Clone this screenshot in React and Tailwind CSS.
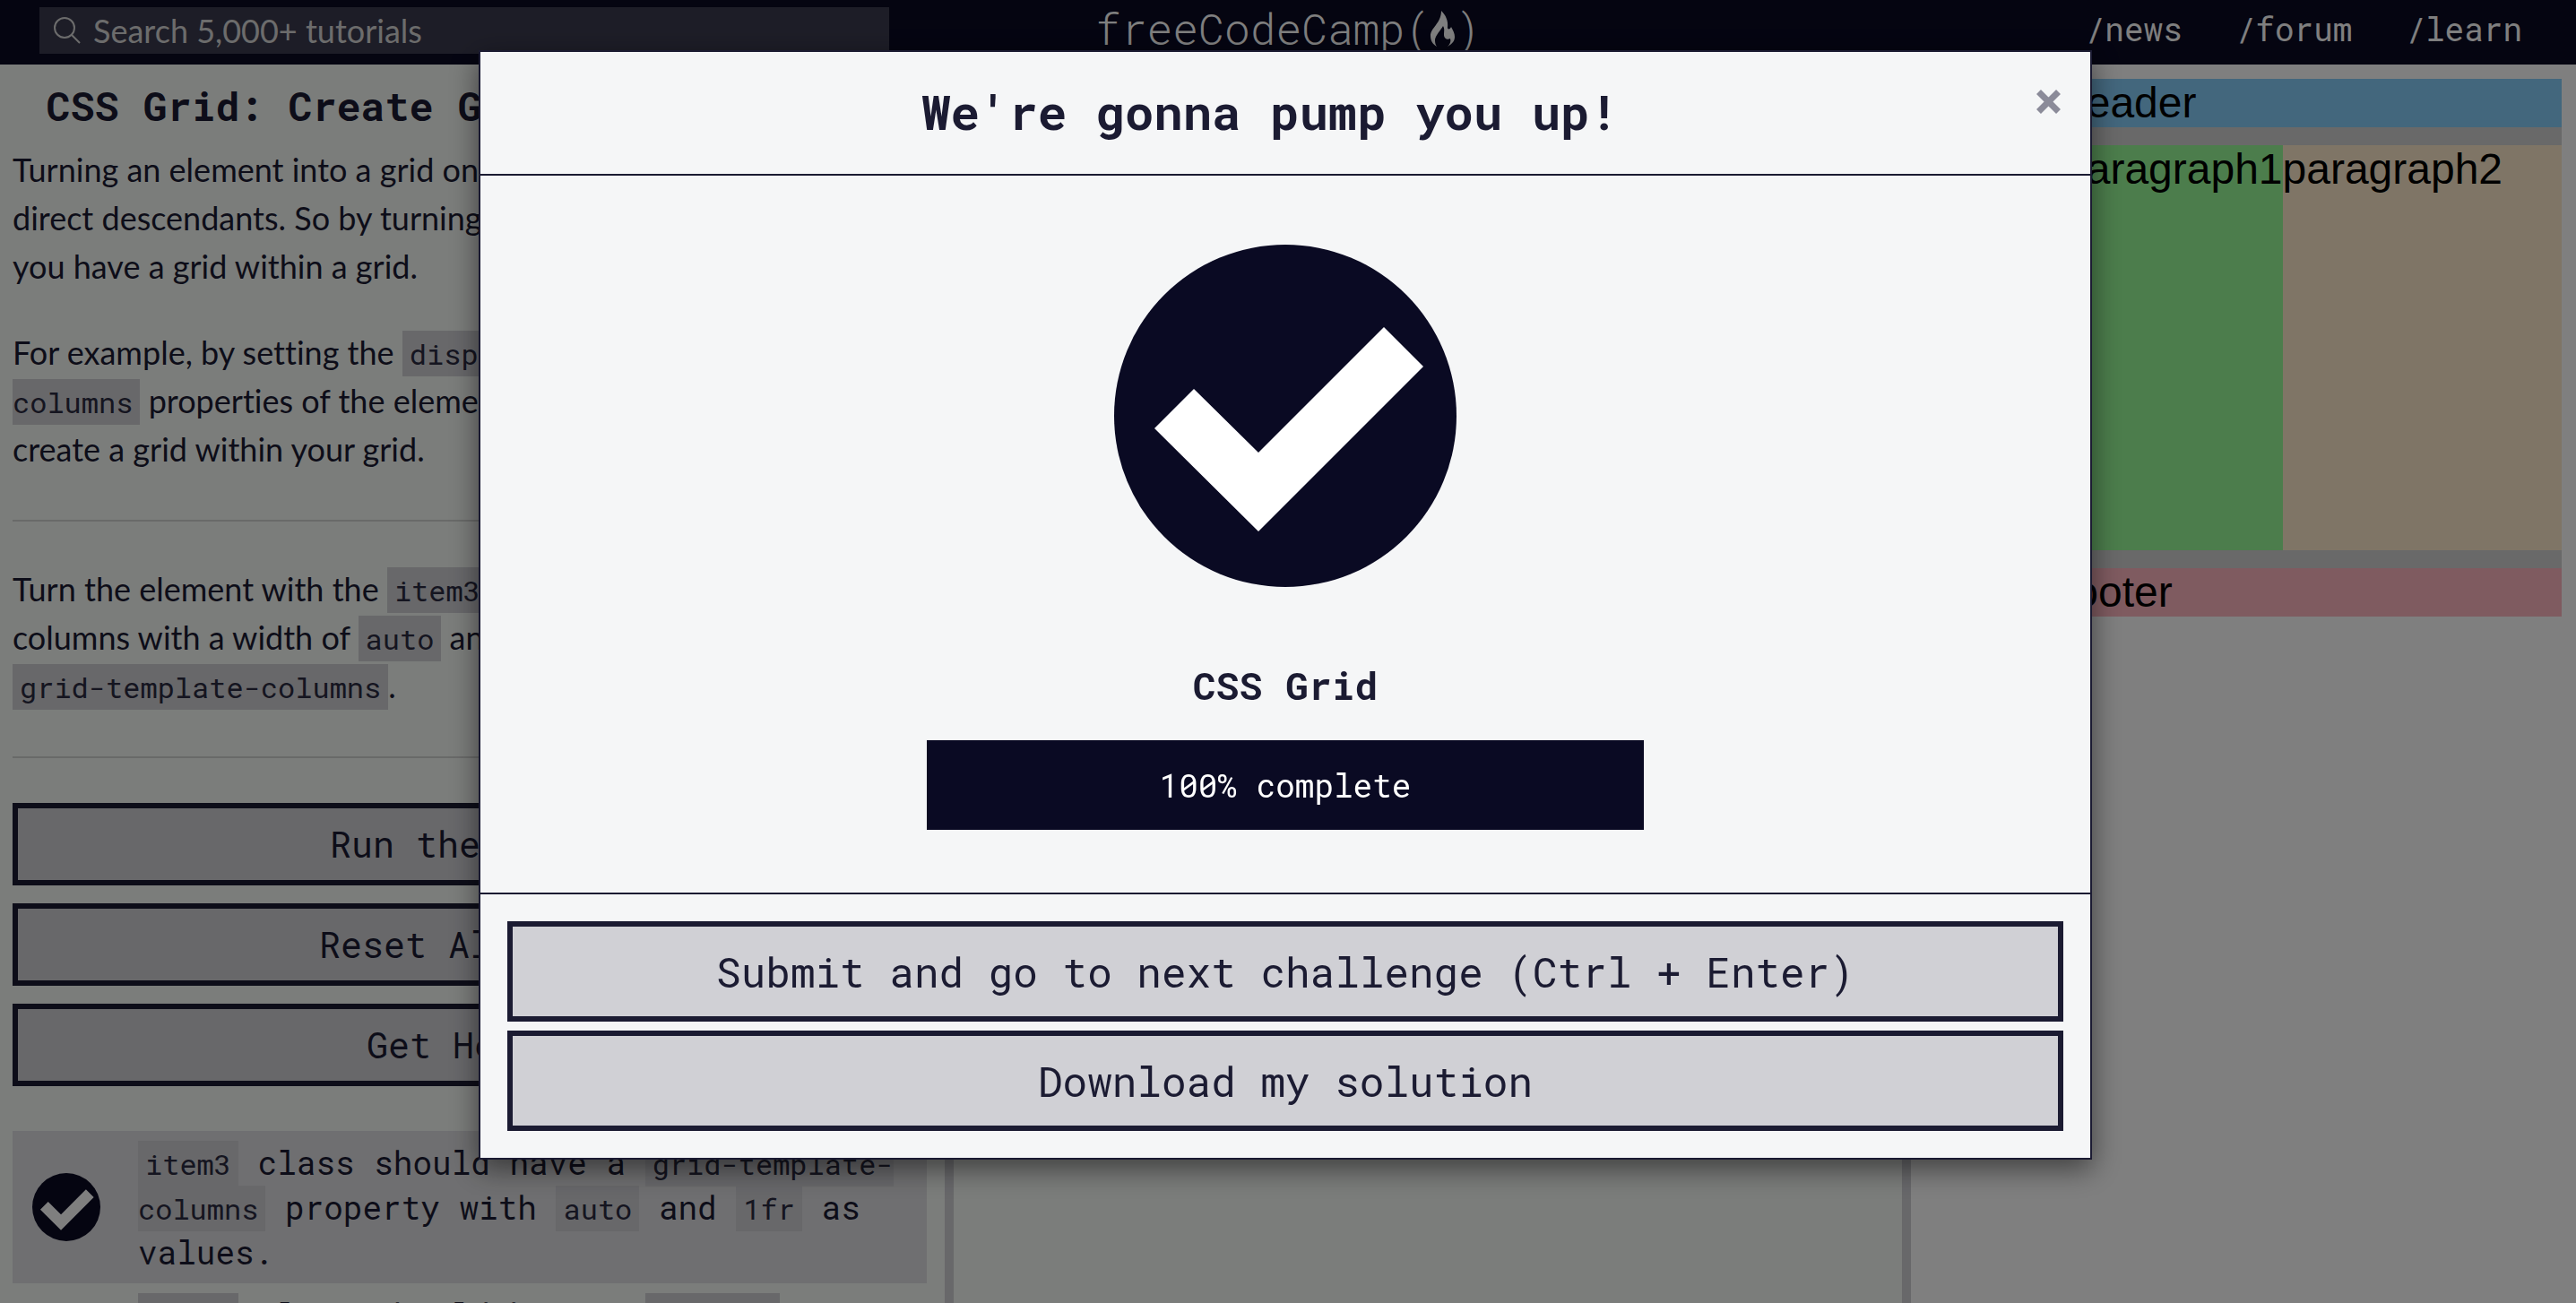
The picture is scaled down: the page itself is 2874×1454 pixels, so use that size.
const MONO = "font-['Roboto_Mono','DejaVu_Sans_Mono',monospace]";

function CheckIcon({ className }) {
  return (
    <svg viewBox="0 0 382 382" className={className} role="img" aria-label="Passed">
      <circle cx="191" cy="191" r="191" fill="#0a0a23" />
      <polygon fill="#fff" points="89,161 161,232 301,92 345,136 161,320 45,205" />
    </svg>
  );
}

function FlameIcon({ className }) {
  return (
    <svg viewBox="0 0 27 40" className={className} aria-hidden="true">
      <path
        fill="currentColor"
        d="M12 0C17 5 20 11 19 19C19 21 22 21 23 18C25 22 27 25 27 29C27 34 24 37 19 40C22 37 23 34 22 31C19 33 15 31 15 27C15 23 16 20 14 17C11 22 6 27 5 32C5 35 5 37 7 40C2 37 0 33 0 28C0 19 12 14 12 0Z"
      />
    </svg>
  );
}

function Code({ children }) {
  return (
    <code className={`${MONO} bg-[#d0d0d5] px-2 py-1 text-[32px] leading-none text-[#2a2a40]`}>
      {children}
    </code>
  );
}

function PanelButton({ children }) {
  return (
    <button
      type="button"
      className={`${MONO} flex h-[92px] w-full items-center justify-center border-[6px] border-[#1b1b32] bg-[#d0d0d5] text-[40px] text-[#1b1b32]`}
    >
      {children}
    </button>
  );
}

function ModalButton({ children }) {
  return (
    <button
      type="button"
      className={`${MONO} h-[112px] w-full border-[6px] border-[#1b1b32] bg-[#d0d0d5] text-[46px] text-[#1b1b32]`}
    >
      {children}
    </button>
  );
}

function NavBar() {
  return (
    <header className="grid h-[72px] shrink-0 grid-cols-[1fr_auto_1fr] items-center bg-[#0a0a23] pb-2 text-white">
      <form role="search" className="mt-2 ml-11 flex h-[52px] max-w-[948px] items-center self-start bg-[#3b3b4f] pl-4">
        <svg viewBox="0 0 30 30" className="h-[30px] w-[30px] shrink-0" fill="none" stroke="#d8d8d8" strokeWidth="2" aria-hidden="true">
          <circle cx="12" cy="12" r="11" />
          <path d="M20 20L29 29" />
        </svg>
        <input
          type="search"
          aria-label="Search"
          placeholder="Search 5,000+ tutorials"
          className="ml-[14px] h-full min-w-0 flex-1 bg-transparent font-['Lato',sans-serif] text-[36px] placeholder:text-[#d8d8d8]"
        />
      </form>
      <a href="#home" className={`${MONO} flex items-center text-[48px] leading-none font-light`}>
        freeCodeCamp(
        <FlameIcon className="h-[40px] w-[27px]" />)
      </a>
      <nav className={`${MONO} flex justify-end gap-[60px] pr-[60px] text-[36px] leading-none`}>
        <a href="#news">/news</a>
        <a href="#forum">/forum</a>
        <a href="#learn">/learn</a>
      </nav>
    </header>
  );
}

function Instructions() {
  return (
    <section className="w-[1054px] shrink-0 overflow-hidden pr-5 pl-[14px] font-['Lato',sans-serif] text-[36px] leading-[54px] text-[#1b1b32] [font-variant-ligatures:none]">
      <h1 className={`${MONO} pt-[18px] text-center text-[45px] leading-[56px] font-bold`}>
        CSS Grid: Create Grids within Grids
      </h1>
      <p className="mt-4">
        Turning an element into a grid only affects the behavior of its
        <br />
        direct descendants. So by turning a direct descendant into a grid,
        <br />
        you have a grid within a grid.
      </p>
      <p className="mt-[42px]">
        For example, by setting the <Code>display</Code> and{" "}
        <Code>
          grid-template-
          <br />
          columns
        </Code>{" "}
        properties of the element with the item3 class, you
        <br />
        create a grid within your grid.
      </p>
      <hr className="mt-[52px] border-t-2 border-[#d3d5d3]" />
      <p className="mt-12">
        Turn the element with the <Code>item3</Code> class into a grid with two
        <br />
        columns with a width of <Code>auto</Code> and <Code>1fr</Code> using display and
        <br />
        <Code>grid-template-columns</Code>.
      </p>
      <hr className="mt-[52px] border-t-2 border-[#d3d5d3]" />
      <div className="mt-[50px] flex flex-col gap-5">
        <PanelButton>Run the Tests</PanelButton>
        <PanelButton>Reset All Code</PanelButton>
        <PanelButton>
          Get Help
          <span className="ml-4 border-x-[11px] border-t-[11px] border-x-transparent border-t-[#1b1b32]" />
        </PanelButton>
      </div>
      <ul className={`${MONO} mt-[50px] leading-[50px]`}>
        <li className="flex items-center bg-[#dfdfe2] py-[10px]">
          <CheckIcon className="mx-[22px] h-[76px] w-[76px] shrink-0" />
          <p className="ml-5">
            <Code>item3</Code> class should have a{" "}
            <Code>
              grid-template-
              <br />
              columns
            </Code>{" "}
            property with <Code>auto</Code> and <Code>1fr</Code> as
            <br />
            values.
          </p>
        </li>
        <li className="flex items-center py-[10px]">
          <CheckIcon className="mx-[22px] h-[76px] w-[76px] shrink-0" />
          <p className="ml-5">
            <Code>item3</Code> class should have a <Code>display</Code>
            <br />
            property with <Code>grid</Code> as value.
          </p>
        </li>
      </ul>
    </section>
  );
}

function Preview() {
  return (
    <section aria-label="Preview" className="min-w-0 flex-1 bg-white p-4 font-['Liberation_Sans',Arial,sans-serif] text-[48px] leading-[54px] text-black">
      <div className="grid h-[600px] grid-cols-[133px_1fr] grid-rows-[auto_1fr_auto] gap-5 bg-[#d3d3d3]">
        <div className="row-span-3" />
        <div className="bg-[#87cefa]">header</div>
        <div className="grid grid-cols-[auto_1fr]">
          <div className="bg-[#98fb98]">paragraph1</div>
          <div className="bg-[#ffebcd]">paragraph2</div>
        </div>
        <div className="bg-[#ffb6c1]">footer</div>
      </div>
    </section>
  );
}

function CompletionModal() {
  return (
    <div className="fixed inset-0 bg-black/50 pt-14 pr-[6px]">
      <div
        role="dialog"
        aria-modal="true"
        aria-labelledby="modal-title"
        className={`${MONO} mx-auto max-w-[1800px] border-2 border-[#1b1b32] bg-[#f5f6f7] text-[#1b1b32] shadow-[0_10px_30px_rgba(0,0,0,0.5)]`}
      >
        <div className="flex items-start border-b-2 border-[#1b1b32] px-[30px] pt-7 pb-8">
          <h2 id="modal-title" className="flex-1 text-center text-[54px] leading-[76px] font-bold">
            We're gonna pump you up!
          </h2>
          <button type="button" aria-label="Close" className="flex h-[54px] w-[34px] items-center justify-center">
            <svg viewBox="0 0 27 27" className="h-[27px] w-[27px]" stroke="#8b8b99" strokeWidth="7" aria-hidden="true">
              <path d="M2.5 2.5L24.5 24.5M24.5 2.5L2.5 24.5" />
            </svg>
          </button>
        </div>
        <div className="flex flex-col items-center pt-[77px] pb-[70px]">
          <CheckIcon className="h-[382px] w-[382px]" />
          <h3 className="mt-20 text-[43px] leading-[60px] font-bold">CSS Grid</h3>
          <div className="mt-[31px] flex h-[100px] w-[800px] items-center justify-center bg-[#0a0a23] text-[36px] text-white">
            100% complete
          </div>
        </div>
        <div className="flex flex-col gap-[10px] border-t-2 border-[#1b1b32] p-[30px]">
          <ModalButton>Submit and go to next challenge (Ctrl + Enter)</ModalButton>
          <ModalButton>Download my solution</ModalButton>
        </div>
      </div>
    </div>
  );
}

export default function App() {
  return (
    <div className="flex h-screen flex-col overflow-hidden bg-[#f7faf7]">
      <NavBar />
      <main className="flex min-h-0 flex-1">
        <Instructions />
        <div className="w-[10px] shrink-0 bg-[#d0d0d5]" />
        <div className="w-[1058px] shrink-0" />
        <div className="w-[10px] shrink-0 bg-[#d0d0d5]" />
        <Preview />
      </main>
      <CompletionModal />
    </div>
  );
}
